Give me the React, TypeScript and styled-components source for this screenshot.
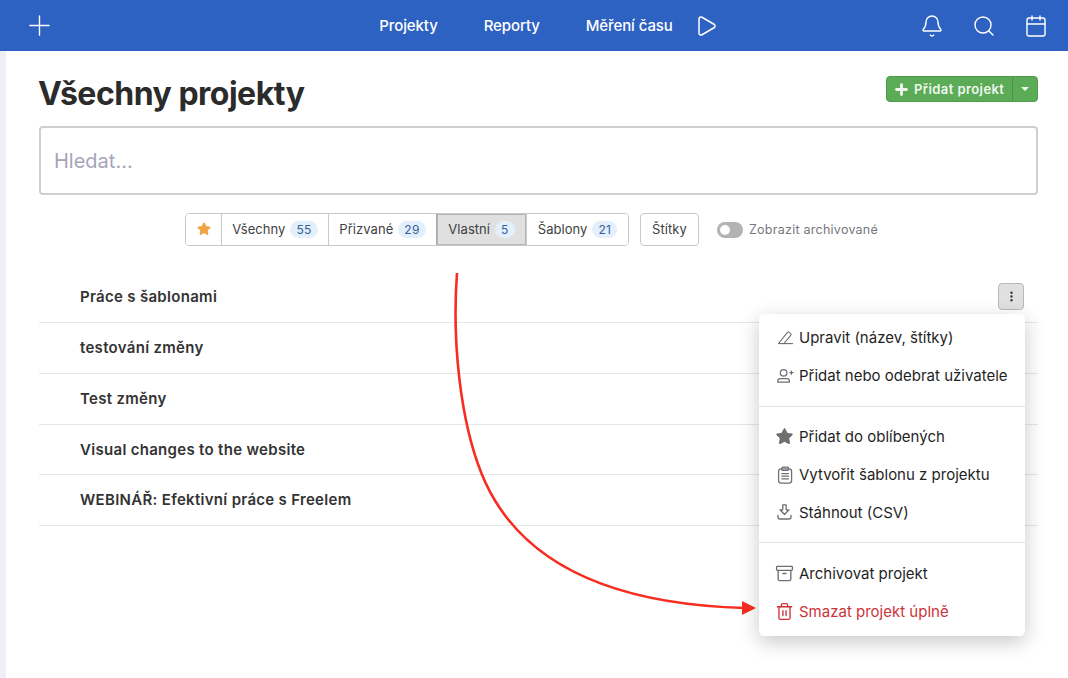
import React from "react";
import styled, { createGlobalStyle } from "styled-components";
import { Plus, Play, Bell, Search, Calendar, Star, Archive, Trash2, EllipsisVertical } from "lucide-react";

const Global = createGlobalStyle`
  html, body { margin: 0; padding: 0; background: #fff; }
  body { font-family: Inter, "Liberation Sans", sans-serif; width: 1068px; height: 678px; overflow: hidden; }
`;

const Page = styled.div`
  position: relative;
  width: 1068px;
  height: 678px;
  display: flex;
  flex-direction: column;
`;

const Header = styled.header`
  height: 51px;
  flex: none;
  background: #2d62c2;
  color: #fff;
  display: grid;
  grid-template-columns: 1fr auto 1fr;
  align-items: center;
  padding: 0 20px 0 23px;
`;

const HeaderSide = styled.div<{ $end?: boolean }>`
  display: flex;
  align-items: center;
  justify-content: ${(p) => (p.$end ? "flex-end" : "flex-start")};
  gap: 28px;
`;

const Nav = styled.nav`
  display: flex;
  align-items: center;
  gap: 46px;
  margin-left: 26px;
`;

const NavLink = styled.span`
  font-size: 15px;
  font-weight: 500;
  line-height: 18px;
  letter-spacing: -0.1px;
`;

const NavTimer = styled.span`
  display: flex;
  align-items: center;
  gap: 21px;
`;

const Body = styled.div`
  flex: 1;
  display: flex;
  min-height: 0;
`;

const Strip = styled.div`
  width: 6px;
  flex: none;
  background: #f0eff5;
`;

const Main = styled.main`
  flex: 1;
  padding: 25px 30px 0 33px;
`;

const TitleRow = styled.div`
  display: flex;
  align-items: flex-start;
  justify-content: space-between;
  height: 50px;
`;

const Title = styled.h1`
  margin: 0 0 0 -1px;
  font-size: 32px;
  line-height: 36px;
  font-weight: 700;
  color: #2b2b2b;
  letter-spacing: -0.5px;
`;

const SplitButton = styled.div`
  display: flex;
  height: 26px;
  width: 152px;
  background: #5cab57;
  border: 1px solid #4f9a4b;
  border-radius: 4px;
  box-sizing: border-box;
  color: #f1f7f0;
  font-size: 13px;
  font-weight: 600;
  letter-spacing: 0.42px;
`;

const SplitMain = styled.div`
  flex: 1;
  display: flex;
  align-items: center;
  gap: 4px;
  padding-left: 6px;
`;

const SplitCaret = styled.div`
  width: 24px;
  border-left: 1px solid #4a9346;
  display: flex;
  align-items: center;
  justify-content: center;
`;

const Caret = styled.span`
  width: 0;
  height: 0;
  border-left: 4px solid transparent;
  border-right: 4px solid transparent;
  border-top: 4px solid #f1f7f0;
`;

const SearchBox = styled.div`
  height: 69px;
  box-sizing: border-box;
  border: 2px solid #cfcfcf;
  border-radius: 4px;
  display: flex;
  align-items: center;
  padding-left: 13px;
  font-size: 20px;
  color: #a6a4b8;
`;

const Filters = styled.div`
  display: flex;
  align-items: center;
  margin-top: 18px;
  margin-left: 146px;
  height: 33px;
`;

const Segments = styled.div`
  display: flex;
  height: 33px;
  box-sizing: border-box;
  border: 1px solid #c9c9c9;
  border-radius: 4px;
  overflow: hidden;
`;

const Segment = styled.div<{ $w: number; $active?: boolean }>`
  width: ${(p) => p.$w}px;
  box-sizing: border-box;
  display: flex;
  align-items: center;
  justify-content: center;
  gap: 5px;
  padding-bottom: 1px;
  font-size: 13px;
  color: #3f3f3f;
  letter-spacing: 0.05px;
  border-left: 1px solid ${(p) => (p.$active ? "#a9a9a9" : "#c9c9c9")};
  background: ${(p) => (p.$active ? "#e0e0e0" : "#fff")};
  box-shadow: ${(p) => (p.$active ? "inset 0 0 0 1px #b5b5b5" : "none")};
  &:first-child { border-left: 0; }
`;

const Badge = styled.span`
  background: #e3effa;
  color: #34609c;
  border-radius: 9px;
  height: 17px;
  padding: 0 6px;
  display: inline-flex;
  align-items: center;
  font-size: 12px;
  letter-spacing: 0.3px;
`;

const TagButton = styled.div`
  margin-left: 11px;
  width: 59px;
  height: 33px;
  box-sizing: border-box;
  border: 1px solid #c9c9c9;
  border-radius: 4px;
  display: flex;
  align-items: center;
  justify-content: center;
  padding-bottom: 1px;
  font-size: 13px;
  color: #3f3f3f;
  letter-spacing: 0.1px;
`;

const Toggle = styled.span`
  margin-left: 18px;
  width: 26px;
  height: 16px;
  border-radius: 8px;
  background: #b3b3b3;
  display: flex;
  align-items: center;
  padding-left: 3px;
  box-sizing: border-box;
`;

const Knob = styled.span`
  width: 10px;
  height: 10px;
  border-radius: 50%;
  background: #fff;
`;

const ToggleLabel = styled.span`
  margin-left: 6px;
  padding-bottom: 1px;
  font-size: 12.5px;
  color: #77767d;
  letter-spacing: 0.25px;
`;

const List = styled.div`
  margin-top: 25px;
`;

const Row = styled.div<{ $h: number; $lead?: boolean }>`
  position: relative;
  height: ${(p) => p.$h}px;
  box-sizing: border-box;
  border-bottom: 1px solid #e6e6e6;
  display: flex;
  align-items: ${(p) => (p.$lead ? "center" : "flex-start")};
  justify-content: space-between;
  padding: ${(p) => (p.$lead ? "0" : "16px")} 14px 0 41px;
  font-size: 15px;
  line-height: 18px;
  font-weight: 600;
  letter-spacing: 0.3px;
  color: #333;
`;

const Kebab = styled.span`
  width: 26px;
  height: 27px;
  box-sizing: border-box;
  background: #e0e0e0;
  border: 1px solid #b9b9b9;
  border-radius: 4px;
  display: flex;
  align-items: center;
  justify-content: center;
  color: #333;
`;

const Menu = styled.div`
  position: absolute;
  left: 759px;
  top: 314px;
  width: 266px;
  height: 322px;
  box-sizing: border-box;
  padding: 4px 0 6px;
  background: #fff;
  border-radius: 5px;
  box-shadow: 0 6px 20px rgba(0, 0, 0, 0.22);
`;

const MenuItem = styled.div<{ $danger?: boolean }>`
  height: 38px;
  display: flex;
  align-items: center;
  padding-left: 16px;
  gap: 5px;
  font-size: 15px;
  color: ${(p) => (p.$danger ? "#cc3338" : "#1f1f1f")};
  svg { flex: none; color: ${(p) => (p.$danger ? "#cc3338" : "#6f6f6f")}; }
`;

const Separator = styled.div<{ $after: number; $before: number }>`
  height: 1px;
  background: #e2e2e2;
  margin: ${(p) => p.$before}px 0 ${(p) => p.$after}px;
`;

const Arrow = styled.svg`
  position: absolute;
  left: 0;
  top: 0;
  pointer-events: none;
`;

const icon = { size: 19, strokeWidth: 1.7 };

const PencilIcon = () => (
  <svg width="19" height="19" viewBox="0 0 19 19" fill="none" stroke="currentColor" strokeWidth="1.1" strokeLinejoin="round">
    <path d="M3.5 15.5 12.2 4.6c.6-.7 1.4-.8 2-.2l1.3 1c.7.6.8 1.4.2 2L9 15.5H4z" />
    <path d="M4 15.6h14" />
  </svg>
);

const UserAddIcon = () => (
  <svg width="19" height="19" viewBox="0 0 19 19" fill="none" stroke="currentColor" strokeWidth="1.25" strokeLinecap="round" strokeLinejoin="round">
    <circle cx="8.6" cy="6.8" r="3.3" />
    <path d="M2.8 16.2v-.9c0-1.5 1.1-2.6 2.6-2.6h6.4c1.5 0 2.6 1.1 2.6 2.6v.9z" />
    <path d="M14.8 6.6h3.2M16.4 5v3.2" />
  </svg>
);

const ClipboardIcon = () => (
  <svg width="19" height="19" viewBox="0 0 19 19" fill="none" stroke="currentColor" strokeWidth="1.25" strokeLinecap="round" strokeLinejoin="round">
    <rect x="3.6" y="3.8" width="13" height="14.4" rx="2.6" />
    <rect x="6.8" y="2.2" width="6.6" height="3.2" rx="1" />
    <path d="M6.8 8.6h6.6M6.8 11.2h6.6M6.8 13.8h6.6" />
  </svg>
);

const DownloadIcon = () => (
  <svg width="19" height="19" viewBox="0 0 19 19" fill="none" stroke="currentColor" strokeWidth="1.3" strokeLinejoin="round" strokeLinecap="round">
    <path d="M7.8 1.8h3.4v5h2.8l-4.5 4.7L5 6.8h2.8z" />
    <path d="M3 12.5V14c0 1.2.8 2 2 2h9c1.2 0 2-.8 2-2v-1.5" />
  </svg>
);

const rows = [
  { name: "testování změny", h: 51 },
  { name: "Test změny", h: 51 },
  { name: "Visual changes to the website", h: 50 },
  { name: "WEBINÁŘ: Efektivní práce s Freelem", h: 51 },
];

export default function App() {
  return (
    <Page>
      <Global />
      <Header>
        <HeaderSide>
          <Plus size={33} strokeWidth={1} />
        </HeaderSide>
        <Nav>
          <NavLink>Projekty</NavLink>
          <NavLink>Reporty</NavLink>
          <NavTimer>
            <NavLink>Měření času</NavLink>
            <Play size={24} strokeWidth={1.5} />
          </NavTimer>
        </Nav>
        <HeaderSide $end>
          <Bell size={24} strokeWidth={1.4} />
          <Search size={24} strokeWidth={1.4} />
          <Calendar size={24} strokeWidth={1.4} />
        </HeaderSide>
      </Header>
      <Body>
        <Strip />
        <Main>
          <TitleRow>
            <Title>Všechny projekty</Title>
            <SplitButton>
              <SplitMain>
                <Plus size={17} strokeWidth={4} />
                Přidat projekt
              </SplitMain>
              <SplitCaret>
                <Caret />
              </SplitCaret>
            </SplitButton>
          </TitleRow>
          <SearchBox>Hledat...</SearchBox>
          <Filters>
            <Segments>
              <Segment $w={35}>
                <Star size={14} fill="#efa445" color="#efa445" />
              </Segment>
              <Segment $w={107}>
                Všechny <Badge>55</Badge>
              </Segment>
              <Segment $w={108}>
                Přizvané <Badge>29</Badge>
              </Segment>
              <Segment $w={90} $active>
                Vlastní <Badge>5</Badge>
              </Segment>
              <Segment $w={102}>
                Šablony <Badge>21</Badge>
              </Segment>
            </Segments>
            <TagButton>Štítky</TagButton>
            <Toggle>
              <Knob />
            </Toggle>
            <ToggleLabel>Zobrazit archivované</ToggleLabel>
          </Filters>
          <List>
            <Row $h={52} $lead>
              Práce s šablonami
              <Kebab>
                <EllipsisVertical size={13} strokeWidth={2.4} />
              </Kebab>
            </Row>
            {rows.map((r) => (
              <Row key={r.name} $h={r.h}>
                {r.name}
              </Row>
            ))}
          </List>
        </Main>
      </Body>
      <Arrow width="1068" height="678" viewBox="0 0 1068 678" fill="none">
        <path d="M457 273C452 340 460 420 481.7 474C515 556 600 604 745 608" stroke="#f62d20" strokeWidth="2.6" />
        <path d="M742 601l14 7-14 7z" fill="#f62d20" />
      </Arrow>
      <Menu>
        <MenuItem><PencilIcon />Upravit (název, štítky)</MenuItem>
        <MenuItem><UserAddIcon />Přidat nebo odebrat uživatele</MenuItem>
        <Separator $before={12} $after={10} />
        <MenuItem><Star size={19} fill="#6f6f6f" strokeWidth={1.2} />Přidat do oblíbených</MenuItem>
        <MenuItem><ClipboardIcon />Vytvořit šablonu z projektu</MenuItem>
        <MenuItem><DownloadIcon />Stáhnout (CSV)</MenuItem>
        <Separator $before={11} $after={11} />
        <MenuItem><Archive {...icon} />Archivovat projekt</MenuItem>
        <MenuItem $danger><Trash2 {...icon} />Smazat projekt úplně</MenuItem>
      </Menu>
    </Page>
  );
}
